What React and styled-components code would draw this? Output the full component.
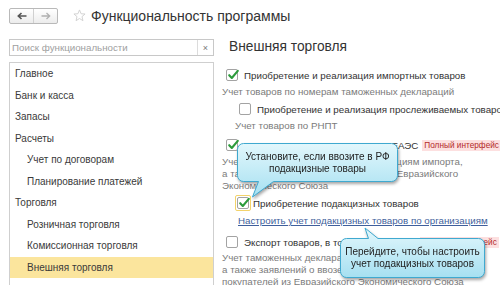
import React from "react";
import styled, { createGlobalStyle } from "styled-components";

const Global = createGlobalStyle`
  html, body { margin: 0; padding: 0; background: #fff; }
  body { width: 500px; height: 285px; overflow: hidden; font-family: "Liberation Sans", Arial, sans-serif; }
`;

const Page = styled.div`
  position: relative;
  width: 500px;
  height: 285px;
  overflow: hidden;
  background: #fff;
  color: #333;
  font-size: 9.75px;
`;

const Header = styled.div`
  display: flex;
  align-items: center;
  height: 31px;
  padding-left: 9px;
`;

const NavGroup = styled.div`
  display: flex;
  height: 16px;
  border: 1px solid #b9b9b9;
  border-radius: 2px;
  background: linear-gradient(#ffffff, #ececec);
  box-sizing: border-box;
`;

const NavButton = styled.div`
  width: 23px;
  display: flex;
  align-items: center;
  justify-content: center;
  & + & { border-left: 1px solid #d0d0d0; }
`;

const StarWrap = styled.div`
  margin-left: 15px;
  display: flex;
  align-items: center;
`;

const Title = styled.div`
  margin-left: 5px;
  font-size: 14px;
  color: #333;
  white-space: nowrap;
`;

const Main = styled.div`
  display: flex;
  padding-top: 8px;
`;

const LeftCol = styled.div`
  width: 205px;
  margin-left: 9px;
  flex-shrink: 0;
  display: flex;
  flex-direction: column;
`;

const Search = styled.div`
  height: 17px;
  box-sizing: border-box;
  border: 1px solid #c8c8c8;
  display: flex;
  align-items: center;
`;

const SearchText = styled.div`
  flex: 1;
  padding-left: 2px;
  font-size: 9.75px;
  color: #a0a0a0;
  white-space: nowrap;
`;

const ClearBtn = styled.div`
  width: 15px;
  height: 100%;
  border-left: 1px solid #dcdcdc;
  display: flex;
  align-items: center;
  justify-content: center;
  color: #777;
  font-size: 9px;
`;

const NavList = styled.div`
  margin-top: 6px;
  border: 1px solid #cfcfcf;
  border-bottom: none;
  height: 230px;
`;

const NavItem = styled.div`
  height: 21.5px;
  line-height: 21.5px;
  padding-left: ${(p) => (p.$level === 2 ? 17 : 5)}px;
  background: ${(p) => (p.$active ? "#fbe59d" : "transparent")};
  color: #3a3a3a;
  font-size: 10px;
  white-space: nowrap;
`;

const RightCol = styled.div`
  margin-left: 8px;
  flex: 1;
  min-width: 0;
  white-space: nowrap;
`;

const Heading = styled.div`
  height: 16px;
  line-height: 16px;
  padding-left: 7px;
  font-size: 13.75px;
  color: #333;
`;

const Options = styled.div`
  padding-top: 11px;
  display: flex;
  flex-direction: column;
`;

const OptionRow = styled.div`
  height: 18px;
  display: flex;
  align-items: center;
  padding-left: ${(p) => p.$indent || 0}px;
  margin-top: ${(p) => p.$mt || 0}px;
  & > * { flex-shrink: 0; }
`;

const Label = styled.span`
  margin-left: 4px;
  color: #333;
`;

const Desc = styled.div`
  line-height: 12px;
  padding: ${(p) => (p.$pt !== undefined ? p.$pt : 2)}px 0 2px ${(p) => p.$indent || 0}px;
  color: #7b7b7b;
`;

const BoxFrame = styled.span`
  display: inline-flex;
  padding: 1px;
  border: 1px solid ${(p) => (p.$focus ? "#f3d36b" : "transparent")};
  margin-left: ${(p) => (p.$focus ? -2 : 0)}px;
  margin-right: ${(p) => (p.$focus ? -2 : 0)}px;
  border-radius: 2px;
`;

const Box = styled.span`
  position: relative;
  width: 12px;
  height: 12px;
  box-sizing: border-box;
  border: 1px solid #a3a3a3;
  border-radius: 2px;
  background: #fff;
  display: inline-block;
`;

const CheckMark = styled.svg`
  position: absolute;
  left: 0px;
  top: -2px;
`;

const Badge = styled.span`
  margin-left: 4px;
  padding: 1px 2px;
  background: #fde0e0;
  color: #b32a2a;
  font-size: 8.25px;
`;

const LinkRow = styled.div`
  height: 18px;
  line-height: 18px;
  padding-left: ${(p) => p.$indent}px;
  color: #3f5f9c;
  text-decoration: underline;
`;

const Tooltip = styled.div`
  position: absolute;
  left: ${(p) => p.$left}px;
  top: ${(p) => p.$top}px;
  width: ${(p) => p.$w}px;
  height: ${(p) => p.$h}px;
  filter: drop-shadow(1px 2px 1.5px rgba(0, 0, 0, 0.35));
`;

const TipText = styled.div`
  position: absolute;
  left: ${(p) => p.$x}px;
  top: ${(p) => p.$y}px;
  width: ${(p) => p.$bw}px;
  height: ${(p) => p.$bh}px;
  display: flex;
  align-items: center;
  justify-content: center;
  text-align: center;
  font-size: 10px;
  line-height: 12px;
  color: #222;
  white-space: nowrap;
`;

function Checkbox({ checked, focus }) {
  return (
    <BoxFrame $focus={focus}>
      <Box>
        {checked && (
          <CheckMark width="13" height="13" viewBox="0 0 13 13">
            <path d="M2.2 7.2 L4.8 10 L10.8 2.8" fill="none" stroke="#2c9b3c" strokeWidth="2.1" strokeLinecap="round" strokeLinejoin="round" />
          </CheckMark>
        )}
      </Box>
    </BoxFrame>
  );
}

function Callout({ left, top, w, h, path, bx, by, bw, bh, children, id }) {
  return (
    <Tooltip $left={left} $top={top} $w={w} $h={h}>
      <svg width={w} height={h} viewBox={`0 0 ${w} ${h}`}>
        <defs>
          <linearGradient id={id} x1="0" y1="0" x2="0" y2="1">
            <stop offset="0" stopColor="#e2f7fc" />
            <stop offset="1" stopColor="#a6e0f1" />
          </linearGradient>
        </defs>
        <path d={path} fill={`url(#${id})`} stroke="#3fa9d0" strokeWidth="1" />
      </svg>
      <TipText $x={bx} $y={by} $bw={bw} $bh={bh}>{children}</TipText>
    </Tooltip>
  );
}

const navItems = [
  ["Главное", 1],
  ["Банк и касса", 1],
  ["Запасы", 1],
  ["Расчеты", 1],
  ["Учет по договорам", 2],
  ["Планирование платежей", 2],
  ["Торговля", 1],
  ["Розничная торговля", 2],
  ["Комиссионная торговля", 2],
  ["Внешняя торговля", 2, true],
];

export default function App() {
  return (
    <Page>
      <Global />
      <Header>
        <NavGroup>
          <NavButton>
            <svg width="10" height="8" viewBox="0 0 10 8">
              <path d="M9.5 4 H2 M4.5 1 L1.3 4 L4.5 7" fill="none" stroke="#555" strokeWidth="1.6" />
            </svg>
          </NavButton>
          <NavButton>
            <svg width="10" height="8" viewBox="0 0 10 8">
              <path d="M0.5 4 H8 M5.5 1 L8.7 4 L5.5 7" fill="none" stroke="#b0b0b0" strokeWidth="1.3" />
            </svg>
          </NavButton>
        </NavGroup>
        <StarWrap>
          <svg width="13" height="13" viewBox="0 0 14 14">
            <path d="M7 1 L8.7 5.1 L13 5.4 L9.7 8.2 L10.7 12.6 L7 10.2 L3.3 12.6 L4.3 8.2 L1 5.4 L5.3 5.1 Z" fill="none" stroke="#cfcfcf" strokeWidth="1" strokeLinejoin="round" />
          </svg>
        </StarWrap>
        <Title>Функциональность программы</Title>
      </Header>
      <Main>
        <LeftCol>
          <Search>
            <SearchText>Поиск функциональности</SearchText>
            <ClearBtn>×</ClearBtn>
          </Search>
          <NavList>
            {navItems.map(([t, l, a]) => (
              <NavItem key={t} $level={l} $active={a}>{t}</NavItem>
            ))}
          </NavList>
        </LeftCol>
        <RightCol>
          <Heading>Внешняя торговля</Heading>
          <Options>
            <OptionRow $indent={2}>
              <Checkbox checked />
              <Label>Приобретение и реализация импортных товаров</Label>
            </OptionRow>
            <Desc>Учет товаров по номерам таможенных деклараций</Desc>
            <OptionRow $indent={15}>
              <Checkbox />
              <Label>Приобретение и реализация прослеживаемых товаров</Label>
            </OptionRow>
            <Desc $indent={13}>Учет товаров по РНПТ</Desc>
            <OptionRow $indent={2} $mt={2}>
              <Checkbox checked />
              <Label>Импорт товаров, в том числе из ЕАЭС</Label>
              <Badge>Полный интерфейс</Badge>
            </OptionRow>
            <Desc>
              Учет товаров по таможенным декларациям импорта,
              <br />
              а также заявлений о ввозе товаров из Евразийского
              <br />
              Экономического Союза
            </Desc>
            <OptionRow $indent={15}>
              <Checkbox checked focus />
              <Label>Приобретение подакцизных товаров</Label>
            </OptionRow>
            <LinkRow $indent={16}>Настроить учет подакцизных товаров по организациям</LinkRow>
            <OptionRow $indent={2} $mt={3}>
              <Checkbox />
              <Label>Экспорт товаров, в том числе в ЕАЭС</Label>
              <Badge>Полный интерфейс</Badge>
            </OptionRow>
            <Desc $pt={1}>
              Учет таможенных деклараций экспорта,
              <br />
              а также заявлений о ввозе товаров от
              <br />
              покупателей из Евразийского Экономического Союза
            </Desc>
          </Options>
        </RightCol>
      </Main>
      <Callout
        id="g1"
        left={236}
        top={141}
        w={164}
        h={60}
        path="M7.5 2.5 H155.5 A6 6 0 0 1 161.5 8.5 V34.5 A6 6 0 0 1 155.5 40.5 H37.5 L16.5 56 L22.5 40.5 H7.5 A6 6 0 0 1 1.5 34.5 V8.5 A6 6 0 0 1 7.5 2.5 Z"
        bx={2}
        by={3}
        bw={159}
        bh={37}
      >
        Установите, если ввозите в РФ
        <br />
        подакцизные товары
      </Callout>
      <Callout
        id="g2"
        left={338}
        top={226}
        w={150}
        h={56}
        path="M8.5 12.5 H30.5 L27 2 L40 12.5 H140.5 A6 6 0 0 1 146.5 18.5 V45.5 A6 6 0 0 1 140.5 51.5 H8.5 A6 6 0 0 1 2.5 45.5 V18.5 A6 6 0 0 1 8.5 12.5 Z"
        bx={3}
        by={13}
        bw={143}
        bh={38}
      >
        Перейдите, чтобы настроить
        <br />
        учет подакцизных товаров
      </Callout>
    </Page>
  );
}
